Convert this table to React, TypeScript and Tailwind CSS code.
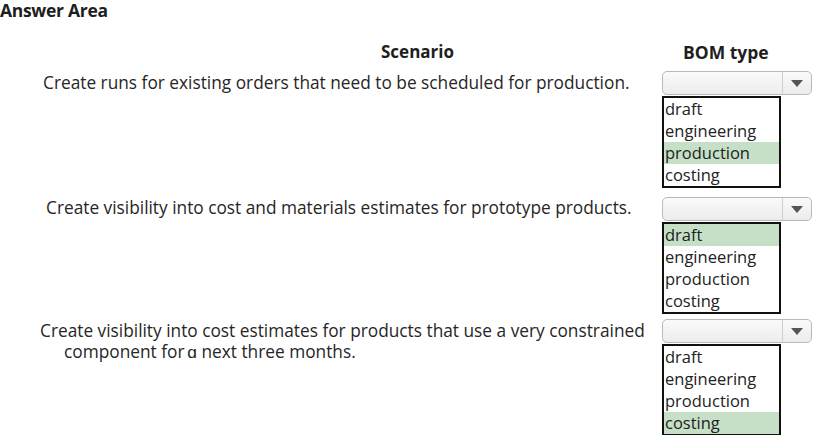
import { Fragment } from 'react';

interface Row {
  lines: string[];
  selected: string;
  gap: string;
  pad: string;
}

const options = ['draft', 'engineering', 'production', 'costing'];

const rows: Row[] = [
  {
    lines: ['Create runs for existing orders that need to be scheduled for production.'],
    selected: 'production',
    gap: 'mt-0',
    pad: 'pl-[43px] pt-[1px]',
  },
  {
    lines: ['Create visibility into cost and materials estimates for prototype products.'],
    selected: 'draft',
    gap: 'mt-[9px]',
    pad: 'pl-[46px]',
  },
  {
    lines: ['Create visibility into cost estimates for products that use a very constrained', 'component for\u2009\u0251 next three months.'],
    selected: 'costing',
    gap: 'mt-[5px]',
    pad: 'pl-[40px] pt-[1px]',
  },
];

function Dropdown({ selected }: { selected: string }) {
  return (
    <div className="flex flex-col">
      <div className="flex h-[24px] w-[150px] rounded-[5px] border border-[#b9b9b9] bg-gradient-to-b from-[#fafafa] to-[#ececec]">
        <div className="flex-1" />
        <div className="flex w-[29px] items-center justify-center border-l border-[#cfcfcf]">
          <svg width="12" height="7" viewBox="0 0 12 7">
            <path d="M0 0 L12 0 L6 7 Z" fill="#555" />
          </svg>
        </div>
      </div>
      <div className="mt-[1px] w-[119px] border-2 border-[#111] bg-white">
        {options.map((o) => (
          <div
            key={o}
            className={`h-[22px] pl-[1px] text-[16.5px] leading-[21px] text-[#222] ${o === selected ? 'bg-[#c6e0c7]' : ''}`}
          >
            {o}
          </div>
        ))}
      </div>
    </div>
  );
}

export default function App() {
  return (
    <div className="h-[435px] w-[814px] overflow-hidden bg-white text-[#1e1e1e]" style={{ fontFamily: '"Open Sans", sans-serif' }}>
      <h1 className="h-[20px] text-[17.5px] font-bold leading-[20px] tracking-[-0.3px]">Answer Area</h1>

      <div className="mt-[20px] flex h-[24px] items-center font-bold">
        <div className="w-[662px] pl-[381px] text-[17px]">Scenario</div>
        <div className="pl-[21px] text-[17.5px]">BOM type</div>
      </div>

      <div className="mt-[7px] flex flex-col">
        {rows.map((r, i) => (
          <div key={i} className={`flex ${r.gap}`}>
            <div className={`w-[662px] text-[17.3px] leading-[21px] text-[#262626] ${r.pad}`}>
              {r.lines.map((l, j) => (
                <Fragment key={j}>
                  <div className={j === 0 ? '' : 'pl-[24px]'}>{l}</div>
                </Fragment>
              ))}
            </div>
            <Dropdown selected={r.selected} />
          </div>
        ))}
      </div>
    </div>
  );
}
